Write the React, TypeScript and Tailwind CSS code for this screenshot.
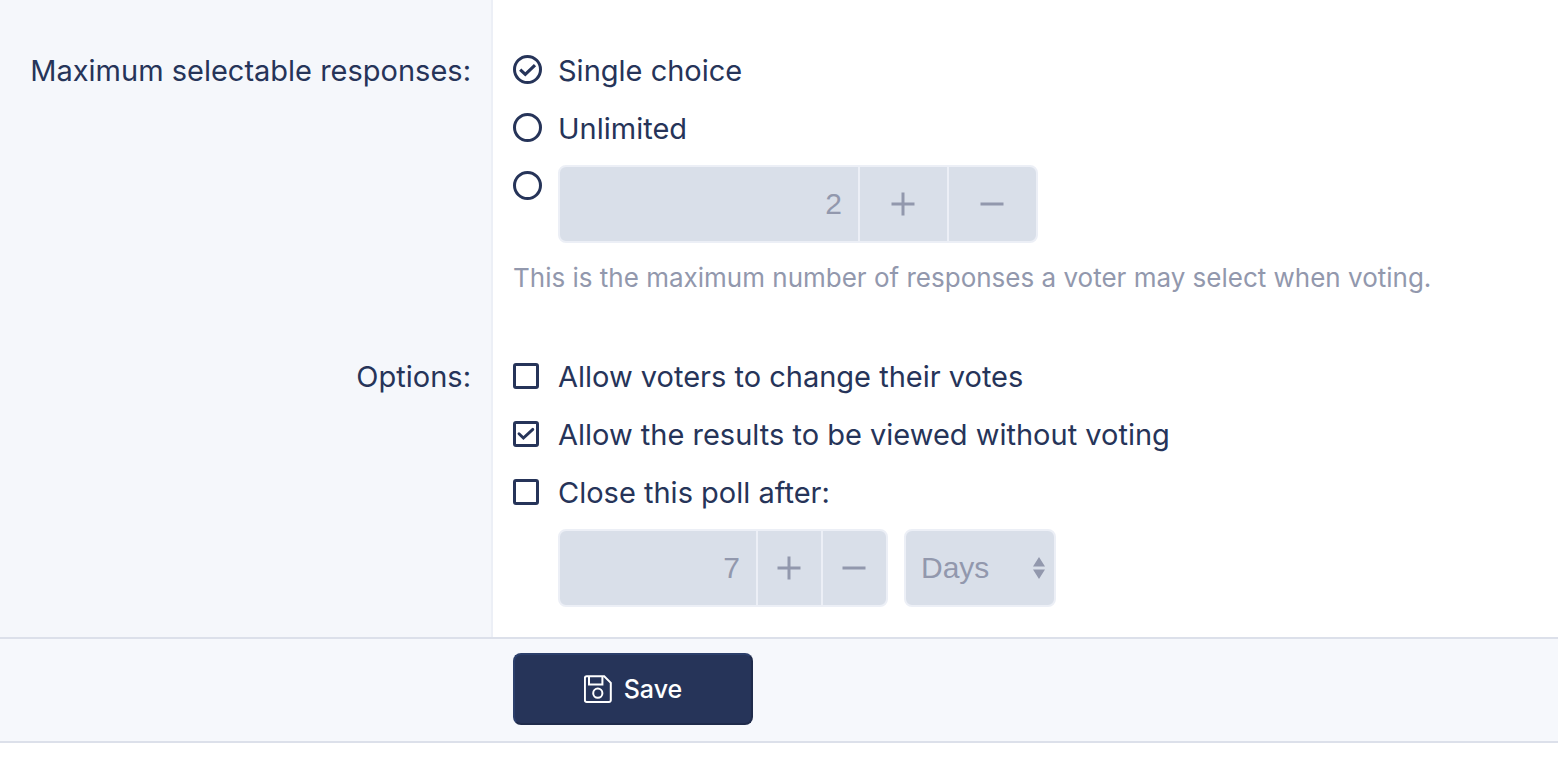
import React, { useState } from "react";
import clsx from "clsx";

type ChoiceProps = {
  type: "radio" | "checkbox";
  name: string;
  label?: string;
  ariaLabel?: string;
  checked: boolean;
  onChange: () => void;
  children?: React.ReactNode;
};

const Choice: React.FC<ChoiceProps> = ({
  type,
  name,
  label,
  ariaLabel,
  checked,
  onChange,
  children,
}) => {
  const round = type === "radio";

  return (
    <div className="flex items-start gap-4">
      <label className="flex items-start gap-4 cursor-pointer">
        <span
          className={clsx(
            "grid w-[29px] shrink-0 justify-items-start",
            round ? "mt-[6px]" : "mt-2"
          )}
        >
          <input
            type={type}
            name={name}
            checked={checked}
            onChange={onChange}
            aria-label={ariaLabel}
            className={clsx(
              "col-start-1 row-start-1 appearance-none bg-white border-3 border-[#263459]",
              round ? "size-[29px] rounded-full" : "size-[26px] rounded-[3px]"
            )}
          />
          {checked && round && (
            <svg
              viewBox="0 0 29 29"
              className="col-start-1 row-start-1 size-[29px] pointer-events-none"
              fill="none"
              stroke="#263459"
              strokeWidth="3.2"
            >
              <path d="M7.2 14.6l5.1 4.8L22 10.2" />
            </svg>
          )}
          {checked && !round && (
            <svg
              viewBox="0 0 26 26"
              className="col-start-1 row-start-1 size-[26px] pointer-events-none"
              fill="none"
              stroke="#263459"
              strokeWidth="2.9"
              strokeLinecap="round"
            >
              <path d="M6 12.8l4.4 4.2L19.8 8.4" />
            </svg>
          )}
        </span>
        {label && <span>{label}</span>}
      </label>
      {children}
    </div>
  );
};

type StepperProps = {
  label: string;
  value: number;
  className: string;
  buttonClassName: string;
};

const Stepper: React.FC<StepperProps> = ({
  label,
  value,
  className,
  buttonClassName,
}) => (
  <div
    className={clsx(
      "flex h-[78px] max-w-full overflow-hidden rounded-lg border-2 border-[#eceff6] bg-[#d9dfe9] text-[#9298ad]",
      className
    )}
  >
    <input
      type="text"
      inputMode="numeric"
      aria-label={label}
      defaultValue={value}
      disabled
      className="min-w-0 flex-1 pr-4 text-right font-['Liberation_Sans',sans-serif] text-[30px]"
    />
    <button
      type="button"
      disabled
      aria-label="Increase"
      className={clsx(
        "flex shrink-0 items-center justify-center border-l-2 border-[#eceff6] pr-[2px]",
        buttonClassName
      )}
    >
      <svg viewBox="0 0 24 24" className="size-6" stroke="currentColor" strokeWidth="3">
        <path d="M0.5 12h23M12 0.5v23" />
      </svg>
    </button>
    <button
      type="button"
      disabled
      aria-label="Decrease"
      className={clsx(
        "flex shrink-0 items-center justify-center border-l-2 border-[#eceff6] pr-[2px]",
        buttonClassName
      )}
    >
      <svg viewBox="0 0 24 24" className="size-6" stroke="currentColor" strokeWidth="3">
        <path d="M0.5 12h23" />
      </svg>
    </button>
  </div>
);

const App: React.FC = () => {
  const [limit, setLimit] = useState("single");
  const [changeVotes, setChangeVotes] = useState(false);
  const [viewResults, setViewResults] = useState(true);
  const [closePoll, setClosePoll] = useState(false);

  return (
    <form
      className="bg-white font-[Inter,sans-serif] text-[29px] leading-[44px] text-[#263459]"
      onSubmit={(e) => e.preventDefault()}
    >
      {/* Maximum responses */}
      <div className="grid grid-cols-[493fr_1065fr]">
        <div
          id="max-label"
          className="border-r-2 border-[#eceff6] bg-[#f5f7fb] pt-[49px] pr-5 text-right"
        >
          Maximum selectable responses:
        </div>
        <div
          role="radiogroup"
          aria-labelledby="max-label"
          className="flex flex-col gap-[14px] px-5 pt-[49px] pb-[26px]"
        >
          <Choice
            type="radio"
            name="limit"
            label="Single choice"
            checked={limit === "single"}
            onChange={() => setLimit("single")}
          />
          <Choice
            type="radio"
            name="limit"
            label="Unlimited"
            checked={limit === "unlimited"}
            onChange={() => setLimit("unlimited")}
          />
          <Choice
            type="radio"
            name="limit"
            ariaLabel="Custom maximum"
            checked={limit === "number"}
            onChange={() => setLimit("number")}
          >
            <Stepper
              label="Maximum responses"
              value={2}
              className="w-[480px]"
              buttonClassName="w-[89px]"
            />
          </Choice>
          <p className="text-[26px] leading-[42px] text-[#9298ad]">
            This is the maximum number of responses a voter may select when voting.
          </p>
        </div>
      </div>

      {/* Options */}
      <div className="grid grid-cols-[493fr_1065fr]">
        <div
          id="options-label"
          className="border-r-2 border-[#eceff6] bg-[#f5f7fb] pt-[30px] pr-5 text-right"
        >
          Options:
        </div>
        <div
          role="group"
          aria-labelledby="options-label"
          className="flex flex-col gap-[14px] px-5 py-[30px]"
        >
          <Choice
            type="checkbox"
            name="change"
            label="Allow voters to change their votes"
            checked={changeVotes}
            onChange={() => setChangeVotes(!changeVotes)}
          />
          <Choice
            type="checkbox"
            name="results"
            label="Allow the results to be viewed without voting"
            checked={viewResults}
            onChange={() => setViewResults(!viewResults)}
          />
          <Choice
            type="checkbox"
            name="close"
            label="Close this poll after:"
            checked={closePoll}
            onChange={() => setClosePoll(!closePoll)}
          />
          <div className="flex flex-wrap gap-4 pl-[45px]">
            <Stepper
              label="Close after"
              value={7}
              className="w-[330px]"
              buttonClassName="w-[65px]"
            />
            <div className="grid w-[152px] items-center text-[#9298ad]">
              <select
                aria-label="Unit"
                disabled
                className="col-start-1 row-start-1 h-[78px] appearance-none rounded-lg border-2 border-[#eceff6] bg-[#d9dfe9] pl-[15px] font-['Liberation_Sans',sans-serif] text-[30px] opacity-100"
              >
                <option>Days</option>
              </select>
              <svg
                viewBox="0 0 12 22"
                className="pointer-events-none col-start-1 row-start-1 mr-[11px] h-[22px] w-3 justify-self-end"
                fill="currentColor"
              >
                <path d="M6 0l6 9.4H0zM6 22l6-9.4H0z" />
              </svg>
            </div>
          </div>
        </div>
      </div>

      {/* Submit row */}
      <div className="grid grid-cols-[493fr_1065fr] border-y-2 border-[#dce0ea] bg-[#f6f8fc]">
        <div className="col-start-2 px-5 pt-[14px] pb-4">
          <button
            type="submit"
            className="flex h-[72px] w-60 items-center justify-center gap-3 rounded-lg border-2 border-t-[#2c3f6b] border-r-[#1f2b4b] border-b-[#1f2b4b] border-l-[#2c3f6b] bg-[#263459] text-[25px] font-medium text-white"
          >
            <svg
              viewBox="0 0 28 28"
              className="size-7"
              fill="none"
              stroke="currentColor"
              strokeWidth="2"
            >
              <path d="M2.6 1.2h17.6l6.6 6.6v17.4a1.8 1.8 0 0 1-1.8 1.8H2.7a1.8 1.8 0 0 1-1.8-1.8V3a1.8 1.8 0 0 1 1.7-1.8z" />
              <path d="M5 1.2v8.2h13.4V1.2" />
              <circle cx="13.8" cy="18.2" r="4.6" />
            </svg>
            Save
          </button>
        </div>
      </div>
    </form>
  );
};

export default App;
